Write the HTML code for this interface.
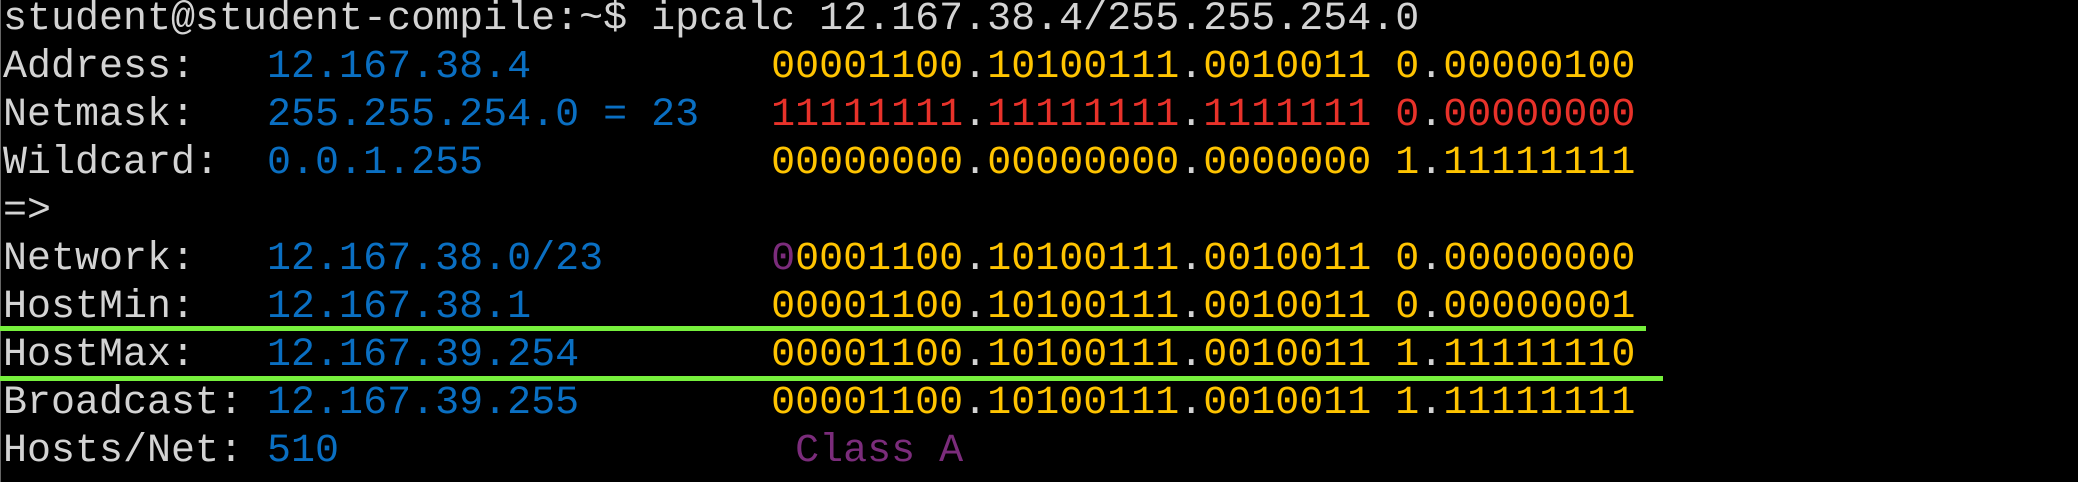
<!DOCTYPE html>
<html><head><meta charset="utf-8"><style>
html,body{margin:0;padding:0;background:#000;width:2078px;height:482px;overflow:hidden}
pre{position:absolute;left:3px;top:-4px;margin:0;font-family:"Liberation Mono",monospace;font-size:40px;line-height:48px;color:#d3d3d3;letter-spacing:0}
.b{color:#0a6fc2}.y{color:#ffc400}.r{color:#e8322a}.p{color:#7b2c7b}.w{color:#d3d3d3}
.g{position:absolute;left:0;height:5px;background:#76f03c}
.v{position:absolute;left:0;top:0;width:1px;height:482px;background:#666}
</style></head><body>
<div class="v"></div>
<pre>student@student-compile:~$ ipcalc 12.167.38.4/255.255.254.0
Address:   <span class="b">12.167.38.4</span>          <span class="y">00001100<span class="w">.</span>10100111<span class="w">.</span>0010011 0<span class="w">.</span>00000100</span>
Netmask:   <span class="b">255.255.254.0 = 23</span>   <span class="r">11111111<span class="w">.</span>11111111<span class="w">.</span>1111111 0<span class="w">.</span>00000000</span>
Wildcard:  <span class="b">0.0.1.255</span>            <span class="y">00000000<span class="w">.</span>00000000<span class="w">.</span>0000000 1<span class="w">.</span>11111111</span>
=&gt;
Network:   <span class="b">12.167.38.0/23</span>       <span class="y"><span class="p">0</span>0001100<span class="w">.</span>10100111<span class="w">.</span>0010011 0<span class="w">.</span>00000000</span>
HostMin:   <span class="b">12.167.38.1</span>          <span class="y">00001100<span class="w">.</span>10100111<span class="w">.</span>0010011 0<span class="w">.</span>00000001</span>
HostMax:   <span class="b">12.167.39.254</span>        <span class="y">00001100<span class="w">.</span>10100111<span class="w">.</span>0010011 1<span class="w">.</span>11111110</span>
Broadcast: <span class="b">12.167.39.255</span>        <span class="y">00001100<span class="w">.</span>10100111<span class="w">.</span>0010011 1<span class="w">.</span>11111111</span>
Hosts/Net: <span class="b">510</span>                   <span class="p">Class A</span></pre>
<div class="g" style="top:326px;width:1646px"></div>
<div class="g" style="top:376px;width:1663px"></div>
</body></html>
